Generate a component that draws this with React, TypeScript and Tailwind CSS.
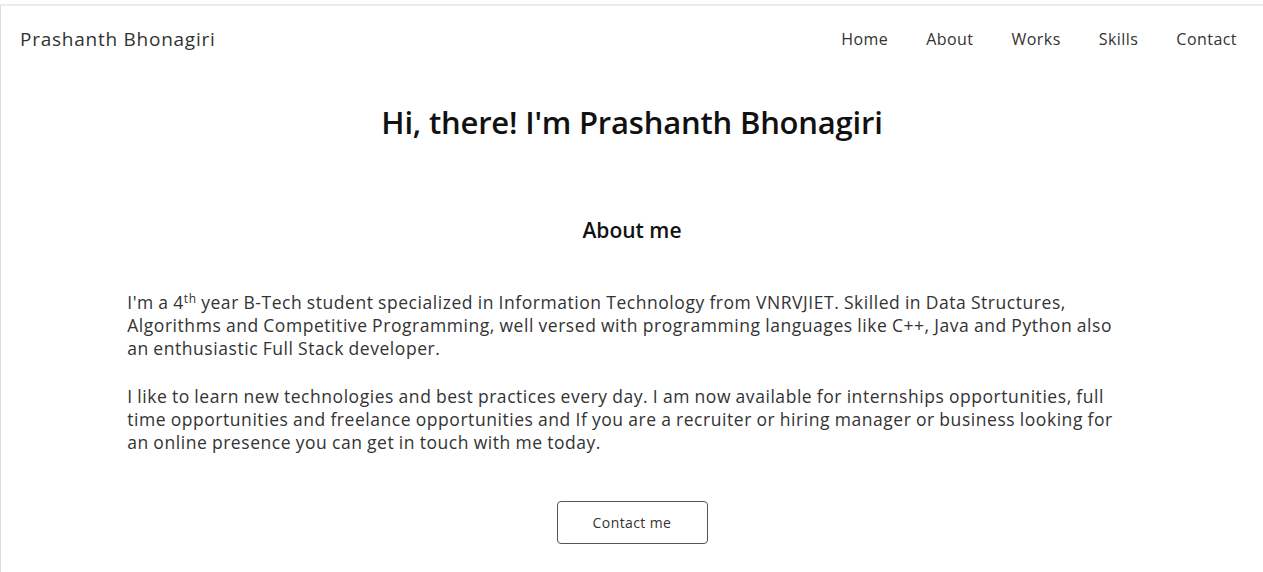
import React from "react";

const navLinks = ["Home", "About", "Works", "Skills", "Contact"];

export default function App() {
  return (
    <div className="min-h-[572px] bg-white font-['Open_Sans',sans-serif]">
      <div className="h-[4px]" />
      <div className="h-[2px] bg-[#ececec]" />
      <div className="border-l border-[#dcdcdc] min-h-[566px]">
        <nav className="h-[66px] flex items-center justify-between pl-[19px] pr-[26px]">
          <p className="text-[19px] tracking-[0.75px] text-[#333]">Prashanth Bhonagiri</p>
          <ul className="flex gap-[38px] text-[16px] tracking-[0.45px] text-[#333]">
            {navLinks.map((link) => (
              <li key={link} className="cursor-pointer">
                {link}
              </li>
            ))}
          </ul>
        </nav>
        <section className="flex flex-col items-center">
          <h1 className="mt-[30px] text-[31px] tracking-[-0.2px] leading-[40px] font-semibold text-[#111]">
            Hi, there! I'm Prashanth Bhonagiri
          </h1>
          <h2 className="mt-[74px] text-[21px] leading-[28px] font-semibold text-[#111]">
            About me
          </h2>
          <div className="w-[80%] mt-[47px] text-[17.5px] tracking-[0.55px] [word-spacing:-0.5px] leading-[23px] text-[#333]">
            <p>
              I'm a 4<sup className="text-[12px] leading-none">th</sup> year B-Tech student
              specialized in Information Technology from VNRVJIET. Skilled in Data Structures,
              Algorithms and Competitive Programming, well versed with programming languages like
              C++, Java and Python also an enthusiastic Full Stack developer.
            </p>
            <p className="mt-[25px]">
              I like to learn new technologies and best practices every day. I am now available for
              internships opportunities, full time opportunities and freelance opportunities and If
              you are a recruiter or hiring manager or business looking for an online presence you
              can get in touch with me today.
            </p>
          </div>
          <button className="mt-[47px] w-[151px] h-[43px] border border-[#555] rounded-[4px] text-[14px] tracking-[0.4px] text-[#333]">
            Contact me
          </button>
        </section>
      </div>
    </div>
  );
}
